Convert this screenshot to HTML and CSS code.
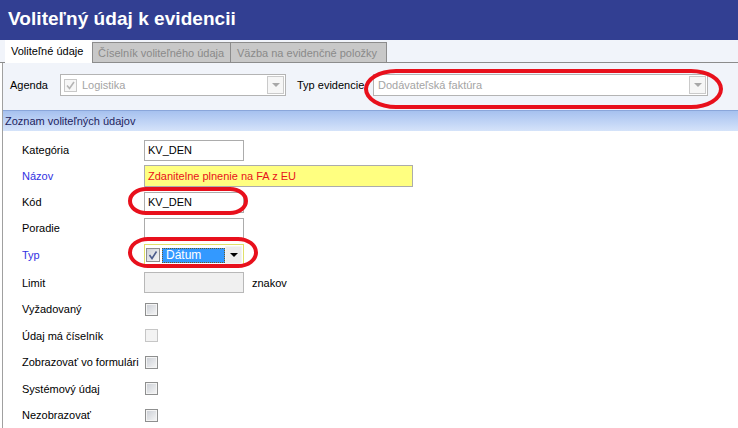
FILE: index.html
```html
<!DOCTYPE html>
<html lang="sk">
<head>
<meta charset="utf-8">
<title>Voliteľný údaj k evidencii</title>
<link rel="stylesheet" href="styles.css">
</head>
<body>
<div class="header"><h1 class="title">Voliteľný údaj k evidencii</h1></div>
<div class="tabs">
  <div class="tab tab-active">Voliteľné údaje</div>
  <div class="tab tab-second">Číselník voliteľného údaja</div>
  <div class="tab tab-third">Väzba na evidenčné položky</div>
</div>
<div class="panel">
  <div class="filter-row">
    <span class="flabel flabel-agenda">Agenda</span>
    <div class="combo combo-agenda">
      <svg class="cb-icon" width="13" height="13" viewBox="0 0 13 13"><rect x="0.5" y="0.5" width="12" height="12" fill="#f7f7f7" stroke="#c8c8c8"/><path d="M3 6.5 L5.5 9.5 L10 3" fill="none" stroke="#b4b4b4" stroke-width="1.6"/></svg>
      <span class="combo-text">Logistika</span>
      <span class="drop drop-light"><span class="tri tri-light"></span></span>
    </div>
    <span class="flabel flabel-typ">Typ evidencie</span>
    <div class="combo combo-typ">
      <span class="combo-text combo-text-typ">Dodávateľská faktúra</span>
      <span class="drop drop-light"><span class="tri tri-light"></span></span>
    </div>
  </div>
  <div class="section">Zoznam voliteľných údajov</div>
  <div class="form">
    <div class="row"><span class="label">Kategória</span><div class="input">KV_DEN</div></div>
    <div class="row"><span class="label label-blue">Názov</span><div class="input input-wide">Zdanitelne plnenie na FA z EU</div></div>
    <div class="row"><span class="label">Kód</span><div class="input">KV_DEN</div></div>
    <div class="row"><span class="label">Poradie</span><div class="input"></div></div>
    <div class="row row-typ"><span class="label label-blue">Typ</span>
      <div class="typcombo">
        <svg class="typ-cb" width="14" height="14" viewBox="0 0 14 14"><defs><linearGradient id="g1" x1="0" y1="0" x2="1" y2="1"><stop offset="0" stop-color="#cdd1d8"/><stop offset="1" stop-color="#f7f7f7"/></linearGradient></defs><rect x="0.5" y="0.5" width="13" height="13" fill="url(#g1)" stroke="#8e8f8f"/><path d="M3.5 7 L6 10.5 L10.5 3.5" fill="none" stroke="#4c5c8c" stroke-width="1.6"/></svg>
        <span class="selected">Dátum</span>
        <span class="drop drop-dark"><span class="tri tri-dark"></span></span>
      </div>
    </div>
    <div class="row row-limit"><span class="label">Limit</span><div class="input input-disabled"></div><span class="unit">znakov</span></div>
    <div class="row row-check"><span class="label">Vyžadovaný</span><span class="check"></span></div>
    <div class="row row-check"><span class="label">Údaj má číselník</span><span class="check check-disabled"></span></div>
    <div class="row row-check"><span class="label">Zobrazovať vo formulári</span><span class="check"></span></div>
    <div class="row row-check"><span class="label">Systémový údaj</span><span class="check"></span></div>
    <div class="row row-check"><span class="label">Nezobrazovať</span><span class="check"></span></div>
  </div>
</div>
<div class="mark mark-typ-evid"></div>
<div class="mark mark-kod"></div>
<div class="mark mark-typ"></div>
</body>
</html>
```

FILE: styles.css
```css
html, body {
  margin: 0;
  padding: 0;
  background: #ffffff;
  font-family: "Liberation Sans", Arial, sans-serif;
  font-size: 11px;
  color: #000;
  overflow: hidden;
}
body {
  width: 738px;
  height: 428px;
  position: relative;
}
.header {
  height: 40px;
  background: #323f92;
  display: flex;
  align-items: center;
}
.title {
  margin: 0;
  padding: 0 0 2px 8px;
  font-size: 19px;
  font-weight: bold;
  color: #ffffff;
  letter-spacing: 0.05px;
}
.tabs {
  height: 22px;
  background: #f1f4fa;
  border-bottom: 1px solid #8c8c8c;
  display: flex;
  align-items: flex-end;
  padding-left: 5px;
}
.tab {
  box-sizing: border-box;
  display: flex;
  align-items: center;
  font-size: 11px;
}
.tab-active {
  width: 87px;
  background: #ffffff;
  margin-bottom: -1px;
  height: 23px;
  padding-left: 6px;
  padding-bottom: 2px;
  position: relative;
}
.tab-second, .tab-third {
  height: 20px;
  background: #c8c8c8;
  color: #8a8a8a;
  border-top: 1px solid #8c8c8c;
  border-right: 1px solid #8c8c8c;
  padding-left: 5px;
}
.tab-second {
  width: 139px;
  border-left: 1px solid #8c8c8c;
}
.tab-third {
  width: 156px;
  padding-left: 6px;
}
.panel {
  margin-left: 2px;
  border-left: 1px solid #a0a0a0;
  height: 365px;
  background: #ffffff;
}
.filter-row {
  height: 47px;
  box-sizing: border-box;
  padding-top: 11px;
  background: #f1f4fa;
  display: flex;
  align-items: flex-start;
}
.flabel {
  height: 22px;
  display: flex;
  align-items: center;
}
.flabel-agenda {
  width: 50px;
  padding-left: 7px;
  box-sizing: content-box;
}
.flabel-typ {
  width: 76px;
  margin-left: 11px;
}
.combo {
  box-sizing: border-box;
  height: 22px;
  background: #ffffff;
  border: 1px solid #b4b4b4;
  display: flex;
  align-items: center;
  padding-left: 3px;
}
.combo-agenda {
  width: 226px;
}
.combo-typ {
  width: 335px;
}
.cb-icon {
  display: block;
  flex: none;
}
.combo-text {
  flex: 1;
  color: #a4a4a4;
  padding-left: 5px;
  font-size: 11px;
}
.combo-text-typ {
  padding-left: 1px;
}
.drop {
  box-sizing: border-box;
  width: 17px;
  height: 18px;
  margin-right: 1px;
  display: flex;
  align-items: center;
  justify-content: center;
  flex: none;
}
.drop-light {
  border: 1px solid #cacaca;
  background: #f6f6f6;
}
.tri {
  width: 0;
  height: 0;
  border-left: 4px solid transparent;
  border-right: 4px solid transparent;
}
.tri-light {
  border-top: 4px solid #a8a8a8;
}
.tri-dark {
  border-top: 4px solid #000000;
}
.section {
  box-sizing: border-box;
  height: 21px;
  border-top: 1px solid #8aa6da;
  background: linear-gradient(#a6c1ef, #d5e3fa);
  color: #1e1e5e;
  display: flex;
  align-items: center;
  padding-left: 2px;
  font-size: 11px;
}
.form {
  padding-top: 6px;
  padding-left: 19px;
  background: #ffffff;
}
.row {
  height: 26px;
  display: flex;
  align-items: center;
}
.row-typ {
  height: 28px;
}
.row-limit {
  height: 27px;
}
.row-check {
  height: 26.5px;
}
.label {
  width: 122px;
  flex: none;
}
.label-blue {
  color: #3131e2;
}
.input {
  box-sizing: border-box;
  width: 100px;
  height: 21px;
  border: 1px solid #acacac;
  background: #ffffff;
  padding-left: 3px;
  display: flex;
  align-items: center;
}
.input-wide {
  width: 269px;
  height: 22px;
  background: #ffff80;
  color: #e8101c;
}
.input-disabled {
  background: #f0f0f0;
  border-color: #b8b8b8;
}
.unit {
  margin-left: 8px;
}
.typcombo {
  box-sizing: border-box;
  width: 100px;
  height: 22px;
  border: 1px solid #e0e06a;
  background: #ffffff;
  display: flex;
  align-items: center;
  padding-left: 1px;
}
.typ-cb {
  display: block;
  flex: none;
}
.selected {
  box-sizing: border-box;
  width: 63px;
  height: 15px;
  margin-left: 2px;
  background: #3399ff;
  color: #ffffff;
  border: 1px dotted #6b5a2a;
  padding-left: 3px;
  display: flex;
  align-items: center;
  font-size: 12px;
}
.drop-dark {
  background: #ececec;
  border: 1px solid #f4f4f4;
}
.check {
  box-sizing: border-box;
  width: 13px;
  height: 13px;
  border: 1px solid #8e8f8f;
  box-shadow: inset 0 0 0 1px #f4f4f4;
  background: linear-gradient(135deg, #c9cdd4, #f7f7f7);
  margin-left: 1px;
}
.check-disabled {
  border-color: #c6c6c6;
  background: #f3f3f3;
  box-shadow: none;
}
.mark {
  position: absolute;
  box-sizing: border-box;
  border: 4px solid #e8101c;
}
.mark-typ-evid {
  left: 364px;
  top: 69px;
  width: 359px;
  height: 40px;
  border-radius: 32px / 50%;
}
.mark-kod {
  left: 128px;
  top: 187px;
  width: 120px;
  height: 28px;
  border-radius: 18px / 50%;
}
.mark-typ {
  left: 128px;
  top: 237px;
  width: 130px;
  height: 31px;
  border-radius: 20px / 50%;
}
```
